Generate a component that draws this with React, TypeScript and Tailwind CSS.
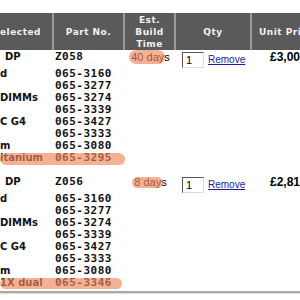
import React from 'react';

interface Line {
  name: string;
  part: string;
  mark?: string;
}

interface Item {
  name: string;
  part: string;
  build: string;
  buildMark: string;
  price: string;
  lines: Line[];
}

const items: Item[] = [
  {
    name: 'DP',
    part: 'Z058',
    build: '40 days',
    buildMark: 'left-[4px] top-0 w-[36px] h-[14px]',
    price: '£3,009.00',
    lines: [
      { name: 'd', part: '065-3160' },
      { name: '', part: '065-3277' },
      { name: 'DIMMs', part: '065-3274' },
      { name: '', part: '065-3339' },
      { name: 'C G4', part: '065-3427' },
      { name: '', part: '065-3333' },
      { name: 'm', part: '065-3080' },
      { name: 'itanium', part: '065-3295', mark: 'left-0 top-[1px] h-[12px] w-[125px]' },
    ],
  },
  {
    name: 'DP',
    part: 'Z056',
    build: '8 days',
    buildMark: 'left-[7px] top-[2px] w-[31px] h-[11px]',
    price: '£2,819.00',
    lines: [
      { name: 'd', part: '065-3160' },
      { name: '', part: '065-3277' },
      { name: 'DIMMs', part: '065-3274' },
      { name: '', part: '065-3339' },
      { name: 'C G4', part: '065-3427' },
      { name: '', part: '065-3333' },
      { name: 'm', part: '065-3080' },
      { name: '1X dual', part: '065-3346', mark: 'left-0 top-[1px] h-[11px] w-[122px]' },
    ],
  },
];

const cols = 'grid grid-cols-[54px_71px_51px_76px_74px]';
const mono = "font-['DejaVu_Sans_Mono',monospace] font-bold text-[11px] tracking-[0.5px] text-[#111]";
const nameFont = "font-['DejaVu_Sans',sans-serif] font-bold text-[10px] text-[#111]";
const sans = "font-['Liberation_Sans',Arial,sans-serif]";
const head = "font-['DejaVu_Sans',sans-serif] font-bold text-[9px] tracking-[0.5px] leading-[12px] text-[#f2f2f2]";

function Marker({ className }: { className: string }) {
  return <span className={`absolute rounded-full bg-[#f0875a]/65 blur-[0.5px] ${className}`} />;
}

function ItemRows({ item }: { item: Item }) {
  return (
    <div className="flex flex-col">
      <div className={`${cols} h-[18px]`}>
        <div className={`pl-[5px] leading-[14px] whitespace-nowrap overflow-hidden ${nameFont}`}>{item.name}</div>
        <div className={`pl-[1px] leading-[14px] ${mono}`}>{item.part}</div>
        <div className={`relative leading-[14px] text-center text-[11px] text-black ${sans}`}>
          {item.build}
          <Marker className={item.buildMark} />
        </div>
        <div className="flex items-start gap-[4px] pl-[6px] pt-[2px]">
          <div
            className={`w-[22px] h-[16px] border-t border-l border-[#555] border-r border-b border-r-[#ddd] border-b-[#ddd] bg-white pl-[3px] text-[11px] leading-[14px] text-black ${sans}`}
          >
            1
          </div>
          <a className={`pt-[1px] text-[10px] leading-[13px] text-[#1c1ca0] underline ${sans}`}>Remove</a>
        </div>
        <div className={`pl-[18px] leading-[14px] whitespace-nowrap font-bold text-[12px] text-black ${sans}`}>
          {item.price}
        </div>
      </div>

      {item.lines.map((line, i) => (
        <div key={i} className="relative grid grid-cols-[54px_71px] w-[125px] h-[12px] leading-[12px]">
          <div className={`whitespace-nowrap overflow-hidden ${nameFont}`}>{line.name}</div>
          <div className={`pl-[1px] ${mono}`}>{line.part}</div>
          {line.mark && <Marker className={line.mark} />}
        </div>
      ))}
    </div>
  );
}

export default function App() {
  return (
    <div className="w-[300px] h-[300px] overflow-hidden bg-white pt-[13px]">
      <div className="w-[326px]">
        <div className={`${cols} h-[37px] bg-[#5a5a5a] ${head}`}>
          <div className="flex items-center justify-end pr-[11px] border-r-2 border-[#9a9a9a] overflow-hidden">
            <span className="whitespace-nowrap">Selected</span>
          </div>
          <div className="flex items-center justify-center border-r-2 border-[#9a9a9a]">Part No.</div>
          <div className="flex flex-col items-center justify-center border-r-2 border-[#9a9a9a]">
            <span>Est.</span>
            <span>Build</span>
            <span>Time</span>
          </div>
          <div className="flex items-center justify-center border-r-2 border-[#9a9a9a]">Qty</div>
          <div className="flex items-center justify-start pl-[7px] whitespace-nowrap">Unit Price</div>
        </div>

        <ItemRows item={items[0]} />
        <div className="h-[11px]" />
        <ItemRows item={items[1]} />

        <div className="mt-[2px] h-[2px] bg-[#a9a9a9]" />
        <div className="h-[1px] bg-[#dcdcdc]" />
      </div>
    </div>
  );
}
